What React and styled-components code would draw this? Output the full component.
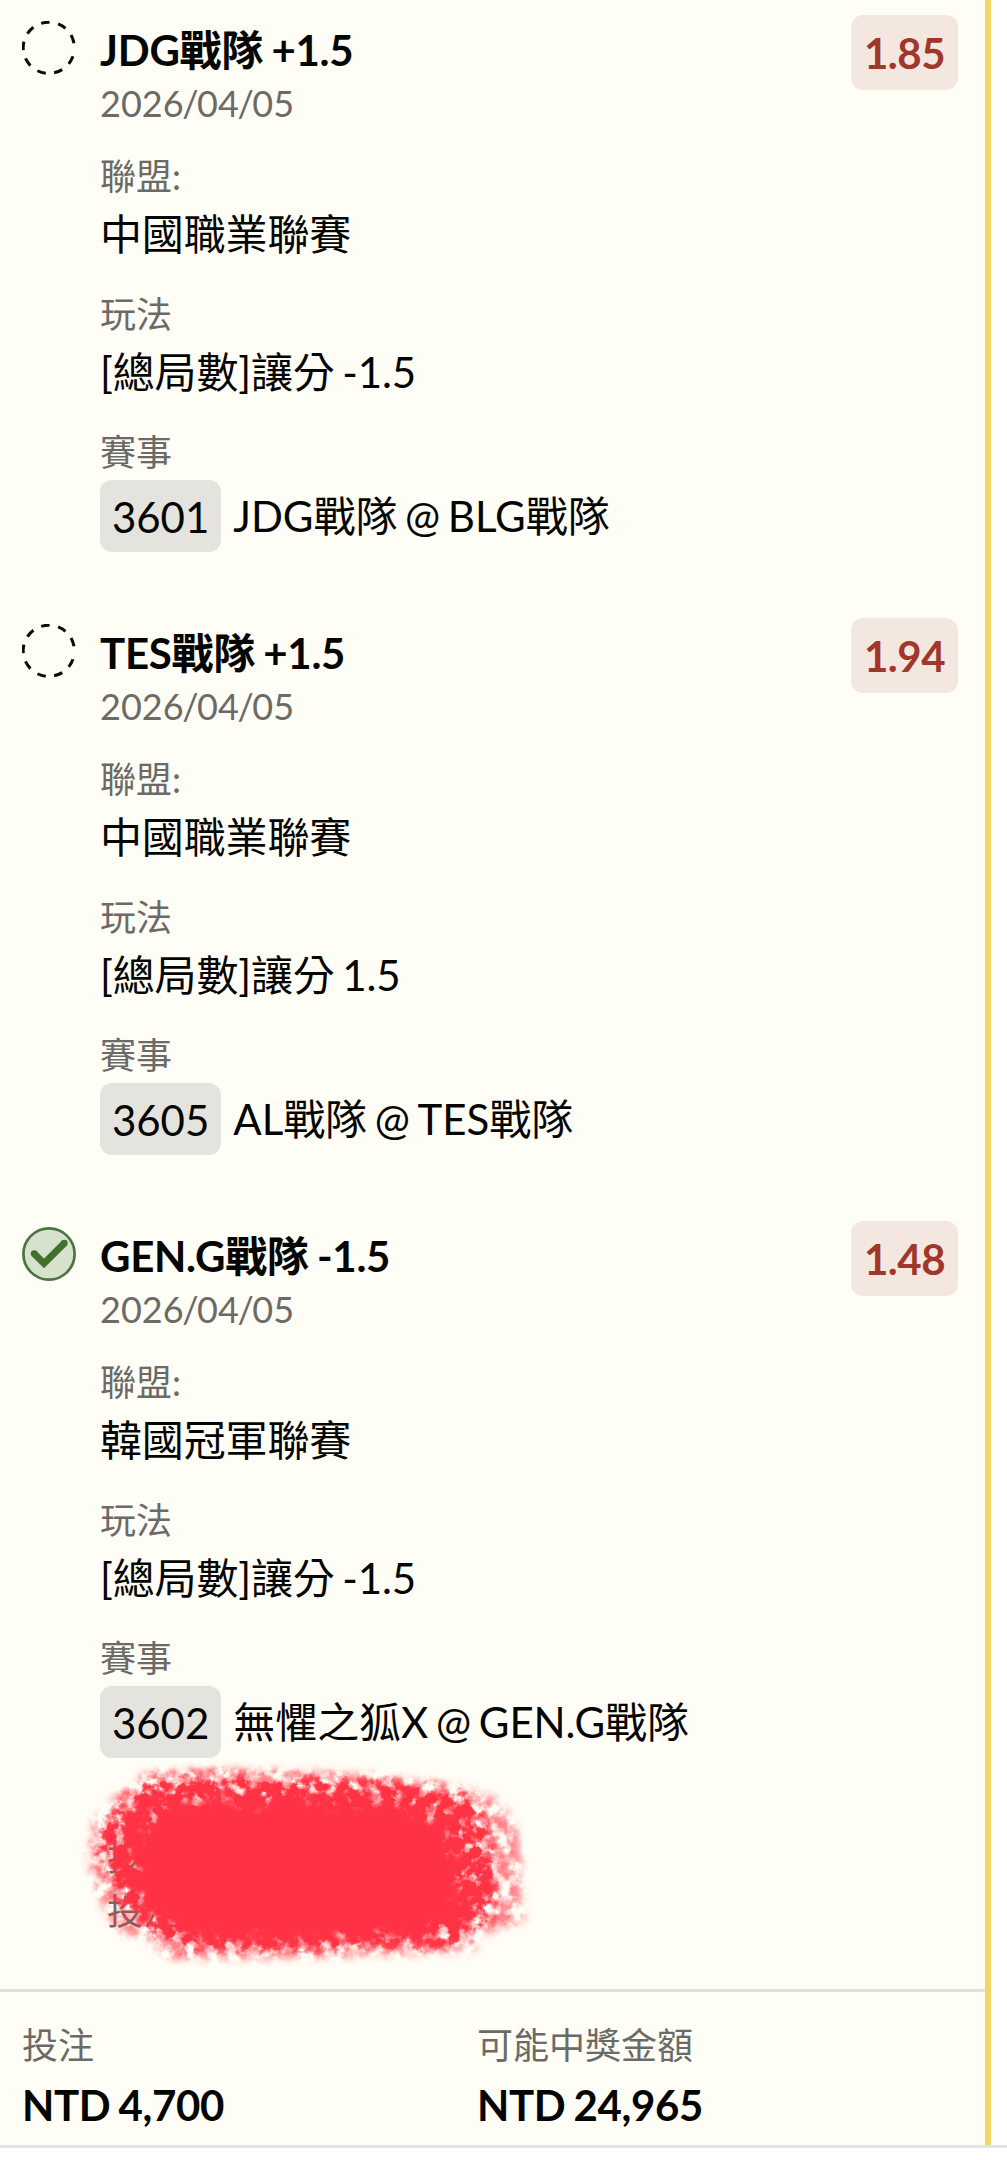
import React from 'react';
import styled, { createGlobalStyle } from 'styled-components';

const GlobalStyle = createGlobalStyle`
  * {
    box-sizing: border-box;
  }

  body {
    margin: 0;
    background: #ffffff;
    color: #050503;
    font-family: Lato, 'Noto Sans CJK TC', sans-serif;
    font-size: 42px;
    word-spacing: -3px;
  }
`;

/* ── Slip shell ── */
const Page = styled.main`
  height: 2160px;
  overflow: hidden;
`;

const Slip = styled.section`
  display: flex;
  flex-direction: column;
  width: 991px;
  height: 2145px;
  background: #fffef6;
  border-right: 6px solid #edd964;
`;

const SlipEnd = styled.div`
  height: 3px;
  background: #e4e4e3;
`;

/* ── One selection ── */
const Selection = styled.article`
  display: flex;
  align-items: flex-start;
  height: 603px;
  padding: 15px 27px 0 22px;
`;

const StatusIcon = styled.svg`
  flex: none;
  width: 54px;
  height: 54px;
  margin: 6px 24px 0 0;
`;

const Details = styled.div`
  flex: 1;
  padding-top: 8px;
  white-space: nowrap;
`;

const Title = styled.h2`
  margin: 0;
  font-size: 42px;
  font-weight: 700;
  letter-spacing: -0.3px;
  word-spacing: -1.5px;
  line-height: 55px;
  height: 54px;
`;

const DateText = styled.div`
  color: #6b6a66;
  font-size: 36px;
  line-height: 52px;
`;

const Slash = styled.span`
  margin: 0 -1.4px;
`;

const Field = styled.div`
  margin-top: ${({ $first }) => ($first ? '22px' : '24px')};
`;

const Label = styled.div`
  color: #6b6a66;
  font-size: 36px;
  line-height: 50px;
`;

const Value = styled.div`
  height: 64px;
  letter-spacing: -0.15px;
  line-height: 66px;
`;

const Match = styled.div`
  display: flex;
  align-items: center;
  gap: 12px;
  margin-top: 3px;
  letter-spacing: -0.05px;
  line-height: 70px;
`;

const MatchId = styled.span`
  height: 72px;
  padding: 0 12px;
  border-radius: 12px;
  background: #e5e3dd;
  line-height: 75px;
`;

const Odds = styled.div`
  flex: none;
  height: 75px;
  padding: 0 13px;
  border-radius: 12px;
  background: #f4e7e0;
  color: #a0372a;
  font-weight: 700;
  letter-spacing: -0.5px;
  line-height: 76px;
`;

/* ── Crossed-out ticket info ── */
const Ticket = styled.div`
  position: relative;
  flex: 1;
  padding: 21px 0 0 107px;
  color: #6b6a66;
  font-size: 36px;
  line-height: 54px;
`;

const Scribble = styled.svg`
  position: absolute;
  left: 60px;
  top: -69px;
`;

/* ── Totals ── */
const Totals = styled.footer`
  display: grid;
  grid-template-columns: 455px 1fr;
  height: 156px;
  padding: 28px 22px 0;
  border-top: 3px solid #e2e1da;
`;

const Amount = styled.div`
  font-weight: 700;
  letter-spacing: -0.4px;
  word-spacing: -1.5px;
  line-height: 70px;
`;

const PendingIcon = () => (
  <StatusIcon viewBox="0 0 54 54" fill="none">
    <circle
      cx="26.8"
      cy="26.8"
      r="25.6"
      stroke="#0a0a08"
      strokeWidth="3"
      strokeDasharray="8.62 8.62"
      strokeDashoffset="8.62"
    />
  </StatusIcon>
);

const WonIcon = () => (
  <StatusIcon viewBox="0 0 54 54" fill="none">
    <circle cx="27" cy="27" r="25.6" fill="#d7e2cd" stroke="#4b7440" strokeWidth="2.7" />
    <path d="M12 26.5L22 36.5L42.5 16" stroke="#43712c" strokeWidth="6.8" />
    <circle cx="12.2" cy="26.6" r="3.4" fill="#43712c" />
    <circle cx="42.3" cy="16.2" r="3.4" fill="#43712c" />
  </StatusIcon>
);

const RedScribble = () => (
  <Scribble width="500" height="240" viewBox="0 0 500 240">
    <defs>
      <filter id="crayon" x="0" y="0" width="500" height="240" filterUnits="userSpaceOnUse" colorInterpolationFilters="sRGB">
        <feGaussianBlur in="SourceAlpha" stdDeviation="13" result="shape" />
        <feTurbulence type="fractalNoise" baseFrequency="0.09" numOctaves="5" seed="11" />
        <feColorMatrix values="0 0 0 0 0  0 0 0 0 0  0 0 0 0 0  0 0 0 2.4 -0.7" result="grain" />
        <feComposite in="shape" in2="grain" operator="arithmetic" k2="1" k3="0.9" k4="-0.5" />
        <feComponentTransfer result="rough">
          <feFuncA type="linear" slope="2.1" intercept="-0.85" />
        </feComponentTransfer>
        <feGaussianBlur in="SourceAlpha" stdDeviation="5" result="bounds" />
        <feFlood floodColor="#ff3344" />
        <feComposite in2="rough" operator="in" />
        <feComposite in2="bounds" operator="in" />
      </filter>
      <filter id="dust" x="0" y="0" width="500" height="240" filterUnits="userSpaceOnUse" colorInterpolationFilters="sRGB">
        <feGaussianBlur in="SourceAlpha" stdDeviation="5" result="shape" />
        <feTurbulence type="fractalNoise" baseFrequency="0.08" numOctaves="5" seed="3" />
        <feColorMatrix values="0 0 0 0 0  0 0 0 0 0  0 0 0 0 0  0 0 0 3 -1" result="grain" />
        <feComposite in="shape" in2="grain" operator="in" result="rough" />
        <feFlood floodColor="#ff3344" />
        <feComposite in2="rough" operator="in" />
      </filter>
      <filter id="core" x="0" y="0" width="500" height="240" filterUnits="userSpaceOnUse">
        <feTurbulence type="fractalNoise" baseFrequency="0.06" numOctaves="4" seed="5" result="wobble" />
        <feGaussianBlur in="SourceGraphic" stdDeviation="5" />
        <feDisplacementMap in2="wobble" scale="34" xChannelSelector="R" yChannelSelector="G" />
      </filter>
    </defs>
    <path
      filter="url(#dust)"
      opacity="0.6"
      d="M88 32L150 29L215 30L300 34L400 46L438 60L458 88L462 130L464 182L440 190L420 194L414 212L340 214L270 218L106 219L92 204L58 191L42 166L28 122L32 82L60 52Z"
    />
    <path
      filter="url(#crayon)"
      d="M88 34L160 31L230 32L310 36L402 46L422 62L436 96L440 140L436 180L412 200L388 212L290 211L240 215L116 213L96 198L66 176L50 150L34 116L38 84L60 58Z"
    />
    <path
      filter="url(#core)"
      fill="#ff3344"
      d="M108 70L150 60L250 62L340 66L388 90L398 140L400 174L362 196L240 202L150 198L106 184L78 156L70 110L78 86Z"
    />
  </Scribble>
);

const selections = [
  {
    title: 'JDG戰隊 +1.5',
    date: '2026/04/05',
    odds: '1.85',
    league: '中國職業聯賽',
    play: '[總局數]讓分 -1.5',
    id: '3601',
    match: 'JDG戰隊 @ BLG戰隊',
  },
  {
    title: 'TES戰隊 +1.5',
    date: '2026/04/05',
    odds: '1.94',
    league: '中國職業聯賽',
    play: '[總局數]讓分 1.5',
    id: '3605',
    match: 'AL戰隊 @ TES戰隊',
  },
  {
    title: 'GEN.G戰隊 -1.5',
    date: '2026/04/05',
    odds: '1.48',
    league: '韓國冠軍聯賽',
    play: '[總局數]讓分 -1.5',
    id: '3602',
    match: '無懼之狐X @ GEN.G戰隊',
    won: true,
  },
];

const SlashDate = ({ value }) => {
  const [year, month, day] = value.split('/');
  return (
    <DateText>
      {year}<Slash>/</Slash>{month}<Slash>/</Slash>{day}
    </DateText>
  );
};

const SelectionRow = ({ item }) => (
  <Selection>
    {item.won ? <WonIcon /> : <PendingIcon />}
    <Details>
      <Title>{item.title}</Title>
      <SlashDate value={item.date} />
      <Field $first>
        <Label>聯盟:</Label>
        <Value>{item.league}</Value>
      </Field>
      <Field>
        <Label>玩法</Label>
        <Value>{item.play}</Value>
      </Field>
      <Field>
        <Label>賽事</Label>
        <Match>
          <MatchId>{item.id}</MatchId>
          <span>{item.match}</span>
        </Match>
      </Field>
    </Details>
    <Odds>{item.odds}</Odds>
  </Selection>
);

const App = () => (
  <Page>
    <GlobalStyle />
    <Slip>
      {selections.map((item) => (
        <SelectionRow key={item.id} item={item} />
      ))}
      <Ticket>
        <div>投注</div>
        <div>投注</div>
        <RedScribble />
      </Ticket>
      <Totals>
        <div>
          <Label>投注</Label>
          <Amount>NTD 4,700</Amount>
        </div>
        <div>
          <Label>可能中獎金額</Label>
          <Amount>NTD 24,965</Amount>
        </div>
      </Totals>
    </Slip>
    <SlipEnd />
  </Page>
);

export default App;
